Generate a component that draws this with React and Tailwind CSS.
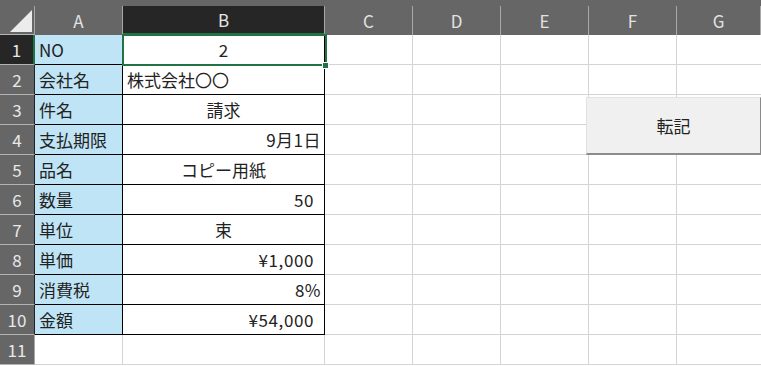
const font = { fontFamily: '"Noto Sans CJK JP", "Noto Sans", sans-serif' };

const cols = ['A', 'B', 'C', 'D', 'E', 'F', 'G'];

const rows = [
  { label: 'NO', value: '2', align: 'center' },
  { label: '会社名', value: '株式会社〇〇', align: 'left' },
  { label: '件名', value: '請求', align: 'center' },
  { label: '支払期限', value: '9月1日', align: 'right' },
  { label: '品名', value: 'コピー用紙', align: 'center' },
  { label: '数量', value: '50', align: 'rightPad' },
  { label: '単位', value: '束', align: 'center' },
  { label: '単価', value: '¥1,000', align: 'rightPad' },
  { label: '消費税', value: '8%', align: 'right' },
  { label: '金額', value: '¥54,000', align: 'rightPad' },
];

const alignClass = {
  center: 'justify-center',
  left: 'justify-start pl-[4px]',
  right: 'justify-end pr-[3px] tracking-[0.5px]',
  rightPad: 'justify-end pr-[10px] tracking-[0.6px]',
};

function EmptyCells() {
  return (
    <>
      <div className="border-r border-b border-[#d4d4d4] bg-white" />
      <div className="border-r border-b border-[#d4d4d4] bg-white" />
      <div className="border-r border-b border-[#d4d4d4] bg-white" />
      <div className="border-r border-b border-[#d4d4d4] bg-white" />
      <div className="border-b border-[#d4d4d4] bg-white" />
    </>
  );
}

export default function App() {
  return (
    <div className="relative w-[761px] h-[366px] overflow-hidden bg-white text-[17px] text-[#222]" style={font}>
      <div className="h-[6px] bg-[#666]" />
      <div className="grid grid-cols-[35px_88px_202px_88px_88px_88px_88px_84px] grid-rows-[29px_repeat(11,30px)]">
        {/* corner */}
        <div className="relative bg-[#666] border-r border-[#a8a8a8] border-b border-b-[#b4b4b4]">
          <svg className="absolute left-[10px] top-[4px]" width="23" height="23" viewBox="0 0 23 23">
            <polygon points="22,0 22,22 0,22" fill="#ececec" />
          </svg>
        </div>
        {cols.map((c) => (
          <div
            key={c}
            className={
              c === 'B'
                ? 'flex items-center justify-center bg-[#262626] text-[#e6e6e6] border-r border-[#a8a8a8] border-b-2 border-b-[#217346]'
                : 'flex items-center justify-center bg-[#666] text-[#e2e2e2] border-r border-[#a8a8a8]'
            }
          >
            {c}
          </div>
        ))}

        {rows.map((r, i) => (
          <Row key={i} n={i + 1} r={r} />
        ))}

        {/* row 11 */}
        <div className="flex items-center justify-center bg-[#666] text-[#e8e8e8] border-r border-[#a8a8a8] border-b border-b-[#b4b4b4]">11</div>
        <div className="border-r border-b border-[#d4d4d4] bg-white" />
        <div className="border-r border-b border-[#d4d4d4] bg-white" />
        <EmptyCells />
      </div>

      {/* selected cell B1 */}
      <div className="absolute left-[122px] top-[34px] w-[205px] h-[32px] border-2 border-[#217346]" />
      <div className="absolute left-[322px] top-[62px] w-[7px] h-[7px] bg-[#217346] border border-white" />

      {/* 転記 button */}
      <button className="absolute left-[586px] top-[97px] w-[175px] h-[58px] bg-[#f0f0f0] border-t border-l border-[#e2e2e2] border-r border-r-[#8a8a8a] border-b-2 border-b-[#8c8c8c] flex items-center justify-center text-[17px] text-[#222]" style={font}>
        転記
      </button>
    </div>
  );
}

function Row({ n, r }) {
  const sel = n === 1;
  return (
    <>
      <div
        className={
          sel
            ? 'flex items-center justify-center bg-[#262626] text-[#e8e8e8] border-r-2 border-r-[#217346] border-b border-b-[#b4b4b4]'
            : 'flex items-center justify-center bg-[#666] text-[#e8e8e8] border-r border-r-[#222] border-b border-b-[#b4b4b4]'
        }
      >
        {n}
      </div>
      <div className="flex items-center pl-[4px] bg-[#bfe4f5] border-r border-b border-black">{r.label}</div>
      <div className={`flex items-center bg-white border-r border-b border-black ${alignClass[r.align]}`}>{r.value}</div>
      <EmptyCells />
    </>
  );
}
